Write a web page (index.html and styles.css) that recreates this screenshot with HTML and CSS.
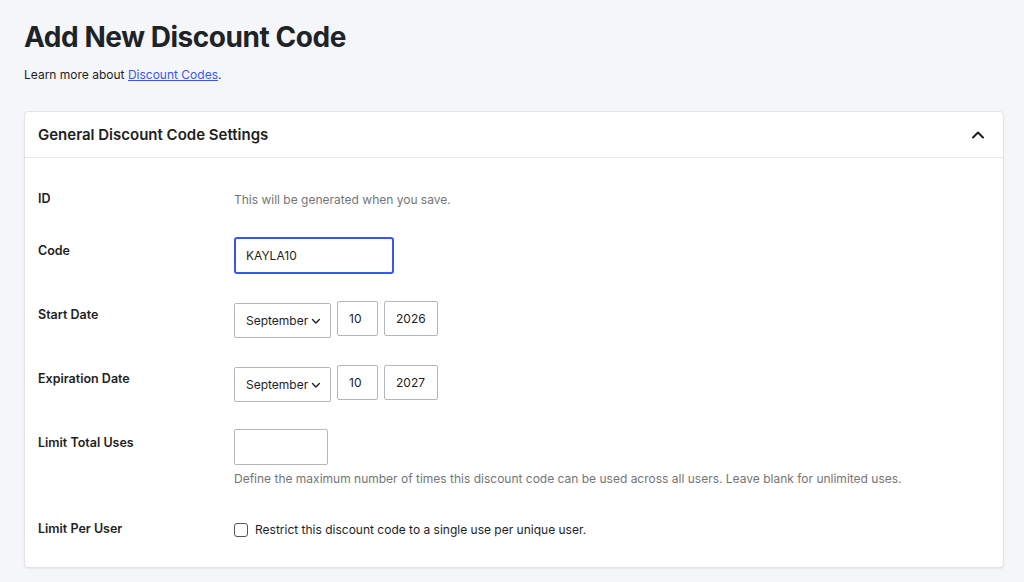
FILE: index.html
```html
<!DOCTYPE html>
<html lang="en">
<head>
<meta charset="utf-8">
<title>Add New Discount Code</title>
<link rel="stylesheet" href="styles.css">
</head>
<body>
<div class="page">
  <h1 class="title">Add New Discount Code</h1>
  <p class="intro">Learn more about <a href="#" class="link">Discount Codes</a>.</p>

  <section class="card">
    <header class="card-head">
      <h2 class="card-title">General Discount Code Settings</h2>
      <svg class="chev-up" width="14" height="14" viewBox="0 0 14 14" aria-hidden="true"><path d="M2 9.5 L7 4.5 L12 9.5" fill="none" stroke="#1e1e1e" stroke-width="2" stroke-linecap="round" stroke-linejoin="round"/></svg>
    </header>
    <div class="card-body">
      <div class="row">
        <div class="label label-text">ID</div>
        <div class="field"><span class="muted line">This will be generated when you save.</span></div>
      </div>
      <div class="row">
        <div class="label label-input">Code</div>
        <div class="field"><div class="input input-code focus">KAYLA10</div></div>
      </div>
      <div class="row">
        <div class="label label-input">Start Date</div>
        <div class="field date">
          <div class="input select">September<svg class="chev-down" width="10" height="10" viewBox="0 0 10 10" aria-hidden="true"><path d="M1.5 3.5 L5 7 L8.5 3.5" fill="none" stroke="#1e1e1e" stroke-width="1.4" stroke-linecap="round" stroke-linejoin="round"/></svg></div>
          <div class="input day">10</div>
          <div class="input year">2026</div>
        </div>
      </div>
      <div class="row">
        <div class="label label-input">Expiration Date</div>
        <div class="field date">
          <div class="input select">September<svg class="chev-down" width="10" height="10" viewBox="0 0 10 10" aria-hidden="true"><path d="M1.5 3.5 L5 7 L8.5 3.5" fill="none" stroke="#1e1e1e" stroke-width="1.4" stroke-linecap="round" stroke-linejoin="round"/></svg></div>
          <div class="input day">10</div>
          <div class="input year">2027</div>
        </div>
      </div>
      <div class="row">
        <div class="label label-input">Limit Total Uses</div>
        <div class="field">
          <div class="input input-limit"></div>
          <p class="muted desc">Define the maximum number of times this discount code can be used across all users. Leave blank for unlimited uses.</p>
        </div>
      </div>
      <div class="row">
        <div class="label label-text">Limit Per User</div>
        <div class="field check-line">
          <span class="checkbox"></span>
          <span class="check-text">Restrict this discount code to a single use per unique user.</span>
        </div>
      </div>
    </div>
  </section>
</div>
</body>
</html>
```

FILE: styles.css
```css
* { box-sizing: border-box; }
html, body { margin: 0; padding: 0; }
body {
  background: #f5f6f9;
  font-family: Inter, "Noto Sans", "Liberation Sans", sans-serif;
  color: #1e1e1e;
  font-size: 12px;
}
.page {
  padding: 19px 20px 16px 24px;
}
.title {
  margin: 0;
  font-size: 28px;
  line-height: 36px;
  font-weight: 700;
  letter-spacing: -0.45px;
  color: #1d2327;
}
.intro {
  margin: 11px 0 0;
  line-height: 18px;
  font-size: 12px;
  color: #1e1e1e;
}
.link { color: #3858e9; text-decoration: underline; }
.card {
  margin-top: 27px;
  background: #fff;
  border: 1px solid #e2e3e6;
  border-radius: 4px;
  box-shadow: 0 1px 2px rgba(0,0,0,0.06);
}
.card-head {
  height: 46px;
  padding: 0 18px 0 13px;
  display: flex;
  align-items: center;
  justify-content: space-between;
  border-bottom: 1px solid #e6e7ea;
}
.card-title {
  margin: 0;
  font-size: 15px;
  font-weight: 600;
  color: #1e1e1e;
}
.chev-up { display: block; }
.card-body {
  padding: 31px 13px 27px;
  display: flex;
  flex-direction: column;
  gap: 27px;
}
.row {
  display: flex;
  align-items: flex-start;
}
.label {
  width: 196px;
  flex: none;
  font-weight: 600;
  font-size: 12.5px;
  line-height: 20px;
}
.label-input { padding-top: 4px; }
.field { flex: 1; }
.line { display: block; line-height: 21px; }
.muted { color: #757575; }
.input {
  display: flex;
  align-items: center;
  height: 35px;
  border: 1px solid #b4b6ba;
  border-radius: 2px;
  padding: 0 11px;
  font-size: 12px;
  color: #1e1e1e;
  background: #fff;
}
.input-code { width: 160px; height: 37px; padding: 0 10px; }
.focus { border: 2px solid #3858e9; border-radius: 3px; }
.date { display: flex; gap: 6px; align-items: flex-start; }
.select { width: 97px; margin-top: 2px; padding: 0 9px 0 11px; gap: 3px; }
.chev-down { display: block; }
.day { width: 41px; }
.year { width: 54px; }
.input-limit { width: 94px; height: 36px; }
.desc {
  margin: 4px 0 3px;
  line-height: 20px;
  font-size: 12px;
}
.check-line {
  display: flex;
  align-items: center;
  gap: 7px;
  height: 21px;
}
.checkbox {
  width: 14px;
  height: 14px;
  border: 1px solid #50575e;
  border-radius: 3px;
  background: #fff;
  flex: none;
}
.check-text { color: #1e1e1e; line-height: 20px; }
```
